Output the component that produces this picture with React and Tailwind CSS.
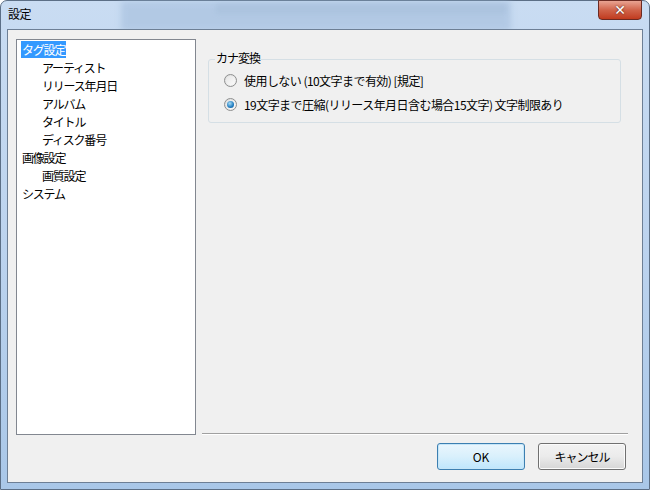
import React from "react";

const font = { fontFamily: '"Noto Sans CJK JP", "Noto Sans", sans-serif' };

function Radio({ checked }) {
  return (
    <span className="relative inline-flex w-[13px] h-[13px] rounded-full border border-[#8e8f8f] bg-gradient-to-br from-[#dcdcdc] to-[#f6f6f6] items-center justify-center shrink-0">
      <span className="w-[9px] h-[9px] rounded-full bg-gradient-to-br from-[#e6e6e6] to-[#fbfbfb] flex items-center justify-center">
        {checked && (
          <span className="w-[7px] h-[7px] rounded-full bg-[radial-gradient(circle_at_40%_35%,#a9dcf6,#1f7cc0_60%,#0d4f8a)]" />
        )}
      </span>
    </span>
  );
}

export default function App() {
  const items = [
    { t: "タグ設定", l: 0, sel: true },
    { t: "アーティスト", l: 1 },
    { t: "リリース年月日", l: 1 },
    { t: "アルバム", l: 1 },
    { t: "タイトル", l: 1 },
    { t: "ディスク番号", l: 1 },
    { t: "画像設定", l: 0 },
    { t: "画質設定", l: 1 },
    { t: "システム", l: 0 },
  ];
  return (
    <div className="w-[650px] h-[490px] overflow-hidden" style={font}>
      <div className="relative w-[650px] h-[490px] rounded-t-[7px] border border-[#5c6f86] bg-gradient-to-b from-[#c9dcf2] via-[#bcd3ee] to-[#a9c7e8] flex flex-col text-[12px] text-black">
        {/* blurred background window showing through glass */}
        <div className="absolute left-[120px] top-0 w-[390px] h-[30px] bg-[#9db8d8] opacity-50 blur-[3px]" />
        <div className="absolute left-[215px] top-[3px] w-[290px] h-[10px] bg-[#a9c1dd] opacity-70 blur-[2px]" />
        {/* title bar */}
        <div className="relative h-[28px] flex items-start">
          <span className="pl-[7px] pt-[5px] text-[12px] leading-[16px] text-black tracking-[-0.5px]">設定</span>
          <div className="absolute right-[7px] top-[-1px] w-[44px] h-[20px] rounded-b-[4px] border border-[#6b2a22] bg-gradient-to-b from-[#e8a392] via-[#d0634a] to-[#c03a1d] flex items-center justify-center">
            <span className="text-white font-bold text-[14px] leading-none [text-shadow:0_0_2px_#3a1a15]" style={{ fontFamily: '"DejaVu Sans", sans-serif' }}>✕</span>
          </div>
        </div>
        {/* client area */}
        <div className="relative mx-[6px] mb-[6px] flex-1 border border-[#6d7f95] bg-[#f0f0f0] flex flex-col">
          <div className="flex flex-1 pt-[9px] pl-[8px]">
            {/* tree */}
            <div className="w-[180px] h-[396px] bg-white border border-[#828790] pl-[3px] tracking-[-1.2px]">
              {items.map((it, i) => (
                <div key={i} className={`h-[18px] flex items-center ${it.l ? "pl-[21px]" : "pl-[1px]"}`}>
                  <span className={`px-[1px] leading-[17px] ${it.sel ? "bg-[#3399ff] text-white" : ""}`}>{it.t}</span>
                </div>
              ))}
            </div>
            {/* right pane */}
            <div className="flex-1 flex flex-col pl-[6px]">
              <div className="relative mt-[20px] ml-[6px] mr-[21px] h-[64px] border border-[#d5dfe5] rounded-[3px] tracking-[-0.55px]">
                <span className="absolute left-[6px] top-[-11px] bg-[#f0f0f0] px-[1px] leading-[17px] tracking-[-1px]">カナ変換</span>
                <div className="flex items-center h-[18px] mt-[11px] ml-[15px] gap-[7px]">
                  <Radio />
                  <span className="leading-[17px]">使用しない (10文字まで有効) [規定]</span>
                </div>
                <div className="flex items-center h-[18px] mt-[6px] ml-[15px] gap-[7px]">
                  <Radio checked />
                  <span className="leading-[17px]">19文字まで圧縮(リリース年月日含む場合15文字) 文字制限あり</span>
                </div>
              </div>
              <div className="flex-1" />
              <div className="mr-[14px] h-[2px] border-t border-[#a0a0a0] border-b-white border-b mb-[8px]" />
            </div>
          </div>
          <div className="h-[36px] flex justify-end items-start gap-[13px] pr-[16px] mb-[3px]">
            <button className="w-[88px] h-[27px] rounded-[3px] border border-[#3c7fb1] bg-gradient-to-b from-[#eaf6fd] via-[#d9f0fc] to-[#bee6fd] shadow-[inset_0_0_0_1px_#c6e6f8] text-[12px]">OK</button>
            <button className="w-[88px] h-[27px] rounded-[3px] border border-[#707070] bg-gradient-to-b from-[#f2f2f2] via-[#ebebeb] to-[#d6d6d6] shadow-[inset_0_0_0_1px_#fbfbfb] text-[12px] tracking-[-1px]">キャンセル</button>
          </div>
        </div>
      </div>
    </div>
  );
}
